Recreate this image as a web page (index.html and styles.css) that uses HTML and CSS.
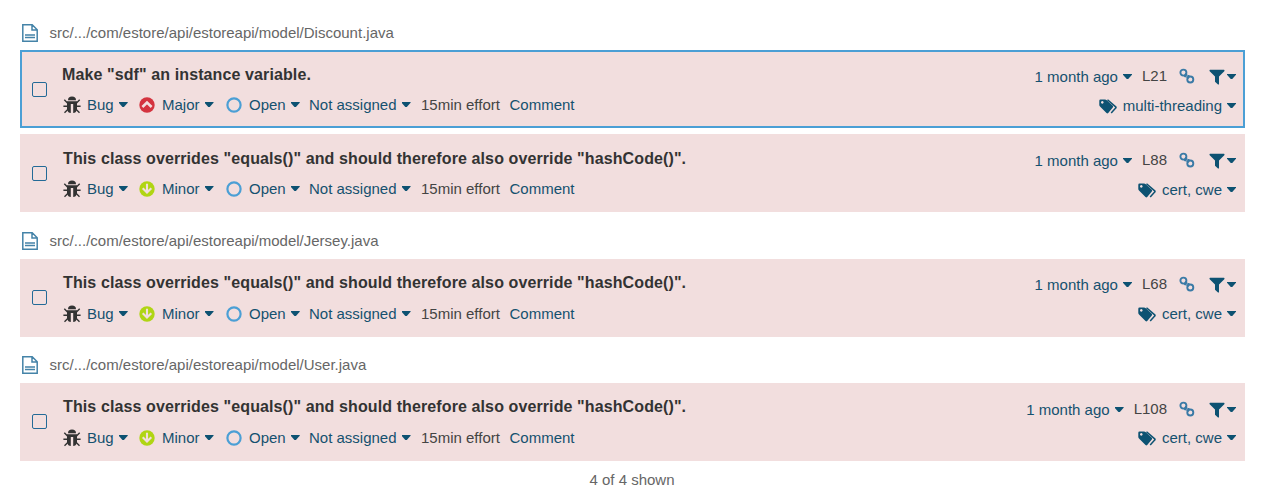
FILE: index.html
```
<!DOCTYPE html>
<html lang="en">
<head>
<meta charset="utf-8">
<title>Issues</title>
<link rel="stylesheet" href="styles.css">
</head>
<body>
<svg class="sprite" aria-hidden="true">
  <symbol id="file" viewBox="0 0 16 18"><path d="M.8.8h9.400l5 5v11.400H.8zM10 .8V6h5.200M3 11h10M3 13.500h10" fill="none" stroke="currentColor" stroke-width="1.500"/></symbol>
  <symbol id="bug" viewBox="0 0 18 18"><path d="M5 4.200a4 3.700 0 0 1 8 0zM4 5.300h10v8.200Q13 17 10.200 17V8H7.800v9Q5 17 4 13.500z" fill="currentColor"/><path d="M4.500 7 1.300 3.800M13.500 7l3.200-3.200M4.500 10.300H.4M13.500 10.300h4.100M5 13.200l-3.500 3.500M13 13.200l3.500 3.500" fill="none" stroke="currentColor" stroke-width="1.400"/></symbol>
  <symbol id="major" viewBox="0 0 16 16"><circle cx="8" cy="8" r="7.700" fill="#d4333f"/><path d="M3.400 10 8 5.600l4.600 4.400" fill="none" stroke="#f2dede" stroke-width="2.600"/></symbol>
  <symbol id="minor" viewBox="0 0 16 16"><circle cx="8" cy="8" r="7.700" fill="#b0d513"/><path d="M8 2.800v8.500M3.700 7.200 8 11.500l4.300-4.300" fill="none" stroke="#f2dede" stroke-width="2.100"/></symbol>
  <symbol id="open" viewBox="0 0 16 16"><circle cx="8" cy="8" r="6.600" fill="none" stroke="#4b9fd5" stroke-width="2.200"/></symbol>
  <symbol id="link" viewBox="0 0 16 16"><g fill="none" stroke="#3a7aa6" stroke-width="1.900"><circle cx="4.400" cy="4.600" r="3"/><circle cx="11.300" cy="11.500" r="3"/><path d="M6.300 5.400 7.800 7.300M8.100 8.600l1.600 1.900M5.200 8l2.400.600M8.300 7.600l2.200.500"/></g></symbol>
  <symbol id="filter" viewBox="0 0 16 16"><path d="M1 .8h14q1 .5.300 1.400L10 7.500v7.700q-.4.700-1 .2L6 12.700V7.500L.7 2.200Q0 1.300 1 .8z" fill="currentColor"/></symbol>
  <symbol id="tags" viewBox="0 0 18 16"><path fill-rule="evenodd" d="M1.500 1.500H6q1 0 1.800.8l6 5.500q.8.800 0 1.700L9.200 15q-.8.800-1.700 0L1 8.500Q.3 7.800.3 6.900V2.700Q.3 1.500 1.500 1.500zM3.300 3.100a1.300 1.300 0 1 0 .01 0z" fill="currentColor"/><path d="M8.500 1.800 16.700 8.900q.6.600 0 1.200l-4.500 4.900" fill="none" stroke="currentColor" stroke-width="1.500"/></symbol>
</svg>
<main class="issues" id="issues"></main>
<footer class="count">4 of 4 shown</footer>
<script src="app.js"></script>
</body>
</html>
```

FILE: styles.css
```
body { margin: 0; background: #fff; color: #444; font: 15px/20px "Liberation Sans", Arial, sans-serif; }
.sprite { position: absolute; width: 0; height: 0; }
.issues { padding: 18px 24px 0 20px; }
.file { display: flex; align-items: center; height: 30px; margin-bottom: 2px; color: #666; }
.file .icon { width: 16px; height: 18px; margin: 0 11.500px 0 2px; color: #4483a8; }
.issue { display: flex; box-sizing: border-box; height: 78px; margin-bottom: 6px; border: 2px solid #f2dede; background: #f2dede; }
.issue.selected { border-color: #4b9fd5; }
.issue + .file { margin-top: 14px; margin-bottom: 3px; }
.issue + .file .icon { margin-top: -1px; }
.issue + .file ~ .file { margin-top: 13px; }
.check { box-sizing: border-box; width: 15px; height: 15px; margin: 30px 15px 0 10px; border: 1px solid #236a97; border-radius: 2px; }
.main { flex: 1; padding-top: 13px; }
.title { margin: 0; padding-left: 1px; color: #333; font-size: 16px; line-height: 20px; font-weight: bold; letter-spacing: .108px; }
.selected .title { padding-left: 0; }
.meta { display: grid; grid-template-columns: 76px 87px 83px 112px 88.500px auto; height: 20px; margin-top: 10px; padding-left: 1px; }
.file + .issue:not(.selected) .check { margin-top: 29px; }
.file + .issue:not(.selected) .main { padding-top: 12px; }
.file + .issue:not(.selected) .meta { margin-top: 11px; }
.file + .issue:not(.selected) .side { padding-top: 14px; }
.file + .issue:not(.selected):last-child .side { padding-top: 15px; }
.item { display: flex; align-items: center; color: #15516f; white-space: nowrap; }
.item .icon { width: 16px; height: 16px; margin-right: 7px; }
.item .bug { width: 18px; height: 18px; margin: 0 6px 0 0; color: #333; }
.caret { width: 9px; height: 5px; margin: -1px 0 0 5px; background: #0d5272; clip-path: polygon(0 0, 100% 0, 100% 15%, 58% 100%, 42% 100%, 0 15%); }
.plain { color: #444; }
.side { padding: 15px 7px 0 0; }
.line { display: flex; justify-content: flex-end; align-items: center; height: 20px; }
.line + .line { margin-top: 9px; }
.issue:last-child .line + .line { margin-top: 8px; }
.number { margin: -2px 12px 0 10px; }
.line .link { width: 16px; height: 16px; margin: -2px 14px 0 0; }
.line .filter { width: 16px; height: 16px; color: #0d5272; }
.line .filter + .caret { margin-left: 2px; }
.line .tags { width: 18px; height: 16px; margin-right: 6px; color: #0d5272; }
.count { padding: 3px 5px 0 0; text-align: center; color: #666; }
```

FILE: app.js
```
const icon = (id) => `<svg class="icon ${id}"><use href="#${id}"/></svg>`;
const caret = '<span class="caret"></span>';
const fileRow = (name) => `<div class="file">${icon('file')}<span>src/.../com/estore/api/estoreapi/model/${name}.java</span></div>`;
const issueRow = (title, severity, line, tags, selected) => `
<article class="issue ${selected ? 'selected' : ''}">
  <span class="check"></span>
  <div class="main">
    <h3 class="title">${title}</h3>
    <div class="meta">
      <span class="item">${icon('bug')}<span>Bug</span>${caret}</span>
      <span class="item">${icon(severity.toLowerCase())}<span>${severity}</span>${caret}</span>
      <span class="item">${icon('open')}<span>Open</span>${caret}</span>
      <span class="item"><span>Not assigned</span>${caret}</span>
      <span class="item plain">15min effort</span>
      <span class="item">Comment</span>
    </div>
  </div>
  <div class="side">
    <div class="line"><span class="item">1 month ago${caret}</span><span class="number">L${line}</span>${icon('link')}${icon('filter')}${caret}</div>
    <div class="line">${icon('tags')}<span class="item">${tags}${caret}</span></div>
  </div>
</article>`;
const equalsTitle = 'This class overrides "equals()" and should therefore also override "hashCode()".';
document.getElementById('issues').innerHTML = [
  fileRow('Discount'),
  issueRow('Make "sdf" an instance variable.', 'Major', 21, 'multi-threading', true),
  issueRow(equalsTitle, 'Minor', 88, 'cert, cwe'),
  fileRow('Jersey'),
  issueRow(equalsTitle, 'Minor', 68, 'cert, cwe'),
  fileRow('User'),
  issueRow(equalsTitle, 'Minor', 108, 'cert, cwe')
].join('');
```
